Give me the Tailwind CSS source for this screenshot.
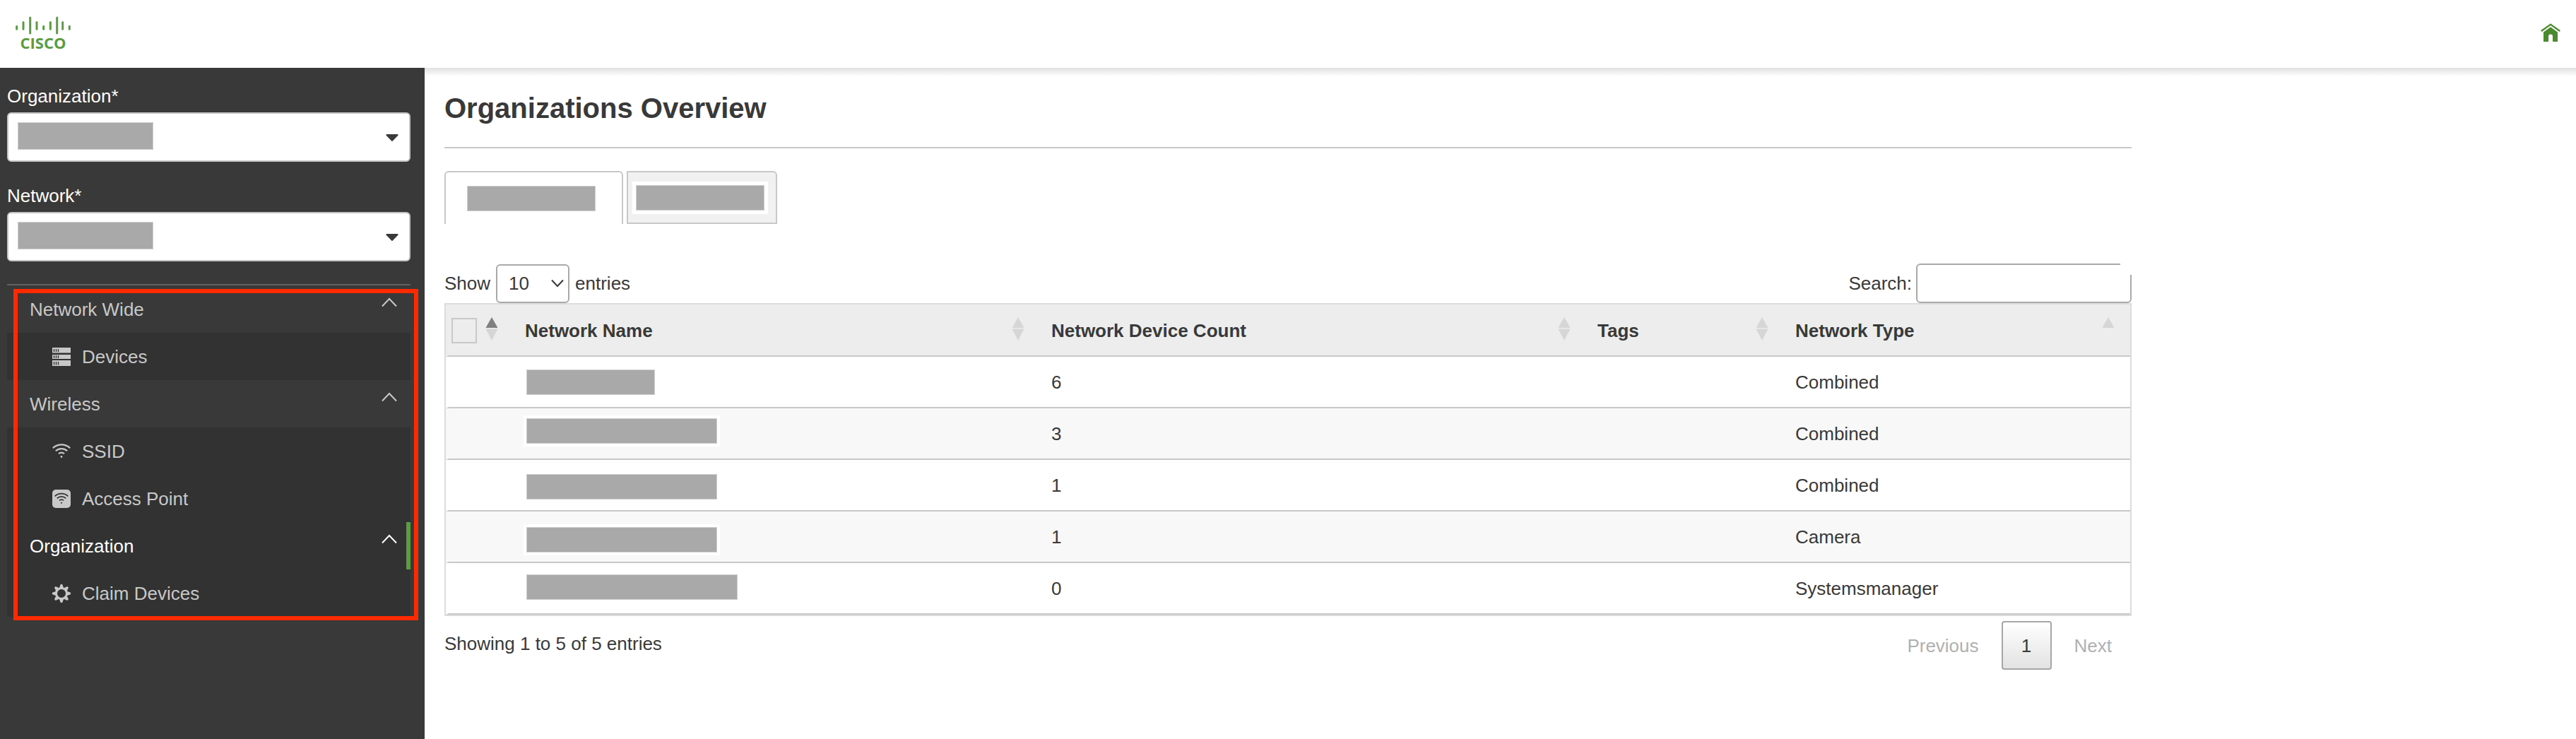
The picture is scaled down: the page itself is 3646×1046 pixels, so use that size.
<!DOCTYPE html>
<html lang="en">
<head>
<meta charset="utf-8">
<meta name="viewport" content="width=device-width, initial-scale=1">
<title>Organizations Overview</title>
<script src="https://cdn.jsdelivr.net/npm/@tailwindcss/browser@4"></script>
</head>
<body class="flex min-h-screen flex-col bg-white font-['Liberation_Sans',Arial,sans-serif] text-[26px] leading-8 text-[#393939]">

<svg class="hidden" aria-hidden="true">
  <symbol id="chevron-up" viewBox="0 0 24 14"><path d="M2 12.500 12 2l10 10.500" fill="none" stroke="currentColor" stroke-width="2"/></symbol>
  <symbol id="caret" viewBox="0 0 18 10"><path d="M1.500 0h15a1 1 0 0 1 .8 1.700L9.800 9.500a1 1 0 0 1-1.600 0L.7 1.700A1 1 0 0 1 1.500 0z" fill="currentColor"/></symbol>
  <symbol id="sort-up" viewBox="0 0 18 33"><path d="M9 0l8.500 15H.5z" fill="currentColor"/></symbol>
  <symbol id="sort-down" viewBox="0 0 18 33"><path d="M9 33l8.500-16.500H.5z" fill="currentColor"/></symbol>
  <symbol id="wifi" viewBox="0 0 26 26"><g fill="none" stroke="currentColor" stroke-width="2.200"><path d="M.8 8.200C7.800 1.800 18.200 1.800 25.200 8.200"/><path d="M4.800 12.200c4.800-4.200 11.600-4.200 16.400 0"/><path d="M9 16.200c2.400-2 5.600-2 8 0"/></g><circle cx="13" cy="20.500" r="1.400" fill="currentColor"/></symbol>
</svg>

<header class="relative flex h-24 shrink-0 items-center justify-between bg-white px-[22px] pb-1">
  <a href="#" aria-label="Cisco home">
    <svg class="h-[60px] w-20 overflow-visible" viewBox="0 -7 80 60">
      <g stroke="#5a9c3f" stroke-width="3" stroke-linecap="round">
        <path d="M1.700 14.200v4M11 8.500v9.700M20.700 2v22M30 8.500v9.700M39.700 14.200v4M49.300 8.500v9.700M58.700 2v22M66.700 8.500v9.700M76.300 14.200v4"/>
      </g>
      <text x="39" y="46" text-anchor="middle" fill="#5a9c3f" class="font-['Open_Sans',sans-serif] text-[22px] font-bold">CISCO</text>
    </svg>
  </a>
  <a href="#" aria-label="Home" class="text-[#4b8a2f]">
    <svg class="h-[26px] w-7" viewBox="0 2 28 26"><path d="M.8 13 14 3.600 27.200 13" fill="none" stroke="currentColor" stroke-width="2.400"/><path d="M4 14.500 14 7.300l10 7.200V28h-7v-7.500a3 3 0 0 0-6 0V28H4z" fill="currentColor"/></svg>
  </a>
</header>

<div class="flex grow">
  <aside class="relative w-[601px] shrink-0 bg-[#393939] pt-6 pr-5 pl-2.5 text-[#c8c8c8]">
    <div class="mb-8 text-white">
      <label for="org" class="mb-1.5 block leading-[33px]">Organization*</label>
      <div class="relative">
        <select id="org" class="block h-[70px] w-full appearance-none rounded-md border-2 border-[#c4c4c4] bg-white px-4"><option></option></select>
        <span class="pointer-events-none absolute top-3.5 left-[15px] h-[39px] w-48 border border-[#cfcfcf] bg-[#a9a9a9]"></span>
        <svg class="pointer-events-none absolute top-[31px] right-[17px] h-2.5 w-[18px] text-[#393939]"><use href="#caret"/></svg>
      </div>
    </div>
    <div class="mb-8 text-white">
      <label for="net" class="mb-1.5 block leading-[33px]">Network*</label>
      <div class="relative">
        <select id="net" class="block h-[70px] w-full appearance-none rounded-md border-2 border-[#c4c4c4] bg-white px-4"><option></option></select>
        <span class="pointer-events-none absolute top-3.5 left-[15px] h-[39px] w-48 border border-[#cfcfcf] bg-[#a9a9a9]"></span>
        <svg class="pointer-events-none absolute top-[31px] right-[17px] h-2.5 w-[18px] text-[#393939]"><use href="#caret"/></svg>
      </div>
    </div>
    <nav class="relative border-t-2 border-[#616161] leading-[69px]">
      <button class="flex h-[67px] w-full items-start justify-between pr-[18px] pl-8">Network Wide<svg class="mt-[17px] h-3.5 w-6"><use href="#chevron-up"/></svg></button>
      <a href="#" class="flex h-[67px] bg-[#323232] pl-16">
        <svg class="mr-4 h-[26px] w-[26px] self-center" viewBox="0 0 26 26"><path d="M0 0h26v7.500H0zM0 10h26v6H0zM0 18h26v8H0z" fill="currentColor"/><path d="M2.500 2v4M5.500 2v4M8.500 2v4M2.500 11v4M5.500 11v4M8.500 11v4M2.500 20v4.500M5.500 20v4.500M8.500 20v4.500" stroke="#323232" stroke-width="1.300"/></svg>Devices</a>
      <button class="flex h-[67px] w-full items-start justify-between pr-[18px] pl-8">Wireless<svg class="mt-[17px] h-3.5 w-6"><use href="#chevron-up"/></svg></button>
      <a href="#" class="flex h-[67px] bg-[#323232] pl-16"><svg class="mr-4 h-[26px] w-[26px] self-center"><use href="#wifi"/></svg>SSID</a>
      <a href="#" class="flex h-[67px] bg-[#323232] pl-16">
        <svg class="mr-4 h-[26px] w-[26px] self-center" viewBox="0 0 26 26"><rect width="26" height="26" rx="5" fill="currentColor"/><g class="text-[#323232]"><use href="#wifi" x="3" y="3" width="20" height="20"/></g></svg>Access Point</a>
      <button class="flex h-[67px] w-full items-start justify-between border-r-[6px] border-[#5a9c3f] bg-[#323232] pr-3 pl-8 text-white">Organization<svg class="mt-[17px] h-3.5 w-6"><use href="#chevron-up"/></svg></button>
      <a href="#" class="flex h-[67px] bg-[#323232] pl-16">
        <svg class="mr-4 h-[26px] w-[26px] self-center" viewBox="-13 -13 26 26"><circle r="7.500" fill="none" stroke="currentColor" stroke-width="3"/><path fill="currentColor" d="M-3-8-1.200-13h2.400L3-8zM-3 8-1.200 13h2.400L3 8zM-8-3-13-1.200v2.400L-8 3zM8-3 13-1.200v2.400L8 3zM3.500-7.800 8.300-10 10-8.300 7.800-3.500zM3.500 7.800 8.300 10 10 8.300 7.800 3.500zM-3.500-7.800-8.300-10-10-8.300-7.800-3.500zM-3.500 7.800-8.300 10-10 8.300-7.800 3.500z"/></svg>Claim Devices</a>
      <div class="pointer-events-none absolute top-[5px] -right-[11px] -bottom-[5px] left-[9px] border-[6px] border-[#ff2a00]"></div>
    </nav>
  </aside>

  <main class="grow bg-linear-to-b from-[#e0e0e0] to-white bg-[length:100%_12px] bg-no-repeat px-7 pt-8">
    <div class="max-w-[2388px]">
      <h1 class="border-b-2 border-[#c8c8c8] pb-[30px] text-[40px] leading-[50px] font-bold">Organizations Overview</h1>

      <div class="mt-8 flex gap-[5px]" role="tablist">
        <button role="tab" aria-selected="true" aria-label="First organization" class="flex h-[75px] w-[253px] items-center rounded-t-md border-2 border-b-0 border-[#c8c8c8] pl-[30px]"><span class="h-9 w-[182px] border border-[#cfcfcf] bg-[#a9a9a9]"></span></button>
        <button role="tab" aria-selected="false" aria-label="Second organization" class="flex h-[75px] w-[213px] items-center rounded-tr-md border-2 border-[#c8c8c8] bg-[#f1f1f1] pl-1.5"><span class="border-[5px] border-white"><span class="block h-9 w-[182px] border border-[#cfcfcf] bg-[#a9a9a9]"></span></span></button>
      </div>

      <div class="mt-14 flex h-14 items-center justify-between">
        <div class="flex items-center">
          <label for="len">Show</label>
          <div class="relative mx-2">
            <select id="len" class="block h-[55px] w-[104px] appearance-none rounded-md border-2 border-[#a9a9a9] bg-white pl-4"><option>10</option></select>
            <svg class="pointer-events-none absolute top-[21px] right-2 h-3 w-[18px]" viewBox="0 0 18 12"><path d="M1 1.500l8 8.500 8-8.500" fill="none" stroke="#393939" stroke-width="2"/></svg>
          </div>
          <span>entries</span>
        </div>
        <div class="relative flex items-center gap-1.5">
          <label for="q">Search:</label>
          <input id="q" type="search" class="h-14 w-[305px] rounded-md border-2 border-[#a9a9a9] bg-white px-3">
          <span class="pointer-events-none absolute top-0 right-0 size-4 bg-white"></span>
        </div>
      </div>

      <table class="w-full table-fixed border-separate border-spacing-0 border-2 border-[#dcdcdc] text-left">
        <colgroup><col class="w-[92px]"><col class="w-[745px]"><col class="w-[773px]"><col class="w-[280px]"><col class="w-[494px]"></colgroup>
        <thead class="bg-[#ededed]">
          <tr>
            <th class="h-[74px] border-b-2 border-l-4 border-b-[#c8c8c8] border-l-transparent p-0 pt-0.5 pr-[18px] pl-1">
              <div class="flex items-center justify-between">
                <input type="checkbox" aria-label="Select all" class="size-9 appearance-none border-2 border-[#c8c8c8]">
                <svg class="mb-1.5 h-[33px] w-[18px]"><use href="#sort-up" class="text-[#808080]"/><use href="#sort-down" class="text-[#d6d6d6]"/></svg>
              </div>
            </th>
            <th class="border-b-2 border-[#c8c8c8] p-0 pt-0.5 pr-[18px] pl-5"><div class="flex items-center justify-between">Network Name<svg class="mb-1.5 h-[33px] w-[18px] text-[#d6d6d6]"><use href="#sort-up"/><use href="#sort-down"/></svg></div></th>
            <th class="border-b-2 border-[#c8c8c8] p-0 pt-0.5 pr-[18px] pl-5"><div class="flex items-center justify-between">Network Device Count<svg class="mb-1.5 h-[33px] w-[18px] text-[#d6d6d6]"><use href="#sort-up"/><use href="#sort-down"/></svg></div></th>
            <th class="border-b-2 border-[#c8c8c8] p-0 pt-0.5 pr-[18px] pl-5"><div class="flex items-center justify-between">Tags<svg class="mb-1.5 h-[33px] w-[18px] text-[#d6d6d6]"><use href="#sort-up"/><use href="#sort-down"/></svg></div></th>
            <th class="border-b-2 border-[#c8c8c8] p-0 pt-0.5 pr-[22px] pl-5"><div class="flex items-center justify-between">Network Type<svg class="mb-1.5 h-[33px] w-[18px] text-[#d6d6d6]"><use href="#sort-up"/></svg></div></th>
          </tr>
        </thead>
        <tbody>
          <tr>
            <td class="h-[73px] border-b-2 border-l-4 border-b-[#c8c8c8] border-l-transparent"></td>
            <td class="border-b-2 border-[#c8c8c8] p-0 pl-[22px]"><div class="h-9 w-[182px] border border-[#cfcfcf] bg-[#a9a9a9]"></div></td>
            <td class="border-b-2 border-[#c8c8c8] p-0 pl-5">6</td><td class="border-b-2 border-[#c8c8c8]"></td><td class="border-b-2 border-[#c8c8c8] p-0 pl-5">Combined</td>
          </tr>
          <tr class="bg-[#f8f8f8]">
            <td class="h-[73px] border-b-2 border-l-4 border-b-[#c8c8c8] border-l-transparent"></td>
            <td class="border-b-2 border-[#c8c8c8] p-0 pb-2 pl-[18px]"><div class="w-fit border-4 border-white"><div class="h-9 w-[270px] border border-[#cfcfcf] bg-[#a9a9a9]"></div></div></td>
            <td class="border-b-2 border-[#c8c8c8] p-0 pl-5">3</td><td class="border-b-2 border-[#c8c8c8]"></td><td class="border-b-2 border-[#c8c8c8] p-0 pl-5">Combined</td>
          </tr>
          <tr>
            <td class="h-[73px] border-b-2 border-l-4 border-b-[#c8c8c8] border-l-transparent"></td>
            <td class="border-b-2 border-[#c8c8c8] p-0 pt-1 pl-[22px]"><div class="h-9 w-[270px] border border-[#cfcfcf] bg-[#a9a9a9]"></div></td>
            <td class="border-b-2 border-[#c8c8c8] p-0 pl-5">1</td><td class="border-b-2 border-[#c8c8c8]"></td><td class="border-b-2 border-[#c8c8c8] p-0 pl-5">Combined</td>
          </tr>
          <tr class="bg-[#f8f8f8]">
            <td class="h-[73px] border-b-2 border-l-4 border-b-[#c8c8c8] border-l-transparent"></td>
            <td class="border-b-2 border-[#c8c8c8] p-0 pt-2 pl-[18px]"><div class="w-fit border-4 border-white"><div class="h-9 w-[270px] border border-[#cfcfcf] bg-[#a9a9a9]"></div></div></td>
            <td class="border-b-2 border-[#c8c8c8] p-0 pl-5">1</td><td class="border-b-2 border-[#c8c8c8]"></td><td class="border-b-2 border-[#c8c8c8] p-0 pl-5">Camera</td>
          </tr>
          <tr>
            <td class="h-[73px] border-b-2 border-l-4 border-b-[#c8c8c8] border-l-transparent"></td>
            <td class="border-b-2 border-[#c8c8c8] p-0 pb-1 pl-[22px]"><div class="h-9 w-[299px] border border-[#cfcfcf] bg-[#a9a9a9]"></div></td>
            <td class="border-b-2 border-[#c8c8c8] p-0 pl-5">0</td><td class="border-b-2 border-[#c8c8c8]"></td><td class="border-b-2 border-[#c8c8c8] p-0 pl-5">Systemsmanager</td>
          </tr>
        </tbody>
      </table>

      <div class="mt-[7px] flex items-start justify-between">
        <p class="pt-4">Showing 1 to 5 of 5 entries</p>
        <div class="flex items-center pr-7 text-[#b0b0b0]">
          <button class="pr-8">Previous</button>
          <button class="h-[69px] w-[71px] rounded-[4px] border-2 border-[#a6a6a6] bg-linear-to-b from-white to-[#e2e2e2] text-[#393939]">1</button>
          <button class="pl-8">Next</button>
        </div>
      </div>
    </div>
  </main>
</div>
</body>
</html>
